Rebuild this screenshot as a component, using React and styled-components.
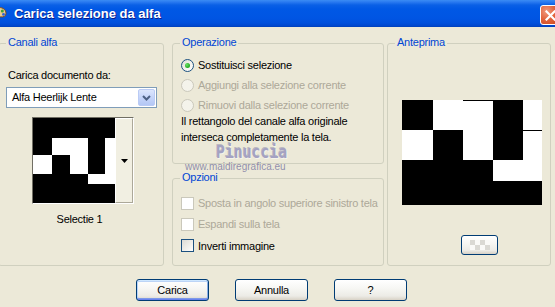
import React from 'react';
import styled, { createGlobalStyle } from 'styled-components';

const GlobalStyle = createGlobalStyle`
  html, body { margin: 0; padding: 0; width: 555px; height: 307px; overflow: hidden; background: #ECE9D8; }
  #root { width: 555px; height: 307px; }
`;

const Window = styled.div`
  position: relative;
  width: 555px;
  height: 307px;
  display: flex;
  flex-direction: column;
  overflow: hidden;
  background: #ECE9D8;
  font-family: "Liberation Sans", Arial, sans-serif;
  font-size: 11px;
  letter-spacing: -0.25px;
  color: #000;
`;

const TitleBar = styled.div`
  height: 27px;
  flex: none;
  display: flex;
  align-items: center;
  background: linear-gradient(180deg, #3B8CF4 0px, #2A7AF0 2px, #0A60E6 5px, #0058E5 9px, #0055E3 18px, #0050DC 23px, #0046CB 26px, #003FB5 27px);
`;

const TitleIcon = styled.svg`
  flex: none;
  margin-left: -9px;
  width: 16px;
  height: 16px;
`;

const TitleText = styled.span`
  margin-left: 7px;
  color: #fff;
  font-weight: bold;
  font-size: 13px;
  letter-spacing: 0;
  line-height: 16px;
  text-shadow: 1px 1px 0 #0A1E8C;
`;

const CloseButton = styled.div`
  align-self: flex-start;
  margin-top: 5px;
  margin-left: auto;
  margin-right: -6px;
  width: 21px;
  height: 20px;
  box-sizing: border-box;
  border: 1px solid #fff;
  border-radius: 3px;
  background: radial-gradient(circle at 30% 30%, #F09A7E 0%, #E2643C 45%, #C8441C 100%);
  display: flex;
  align-items: center;
  justify-content: center;
  flex: none;
`;

const Body = styled.div`
  flex: 1;
  display: flex;
  flex-direction: column;
  padding-top: 16px;
`;

const Columns = styled.div`
  display: flex;
  height: 223px;
`;

const Column = styled.div`
  display: flex;
  flex-direction: column;
  gap: 14px;
  margin-left: ${p => p.$ml}px;
`;

const Group = styled.div`
  position: relative;
  box-sizing: border-box;
  flex: none;
  width: ${p => p.$w}px;
  height: ${p => p.$h}px;
  margin-left: ${p => p.$ml || 0}px;
  border: 1px solid #D0D0BF;
  border-radius: 3px;
  display: flex;
  flex-direction: column;
  padding: ${p => p.$pad};
`;

const GroupTitle = styled.span`
  position: absolute;
  top: -7px;
  left: 7px;
  padding: 0 2px;
  background: #ECE9D8;
  color: #0046D5;
  line-height: 11px;
  white-space: nowrap;
`;

const Label = styled.div`
  line-height: 13px;
  white-space: nowrap;
  color: ${p => (p.$disabled ? '#ACA899' : '#000')};
`;

const Combo = styled.div`
  margin-top: 5px;
  margin-left: -2px;
  width: 151px;
  height: 21px;
  box-sizing: border-box;
  border: 1px solid #7F9DB9;
  background: #fff;
  padding: 1px;
  display: flex;
  align-items: stretch;
`;

const ComboText = styled.div`
  flex: 1;
  padding-left: 4px;
  display: flex;
  align-items: center;
  line-height: 13px;
`;

const ComboButton = styled.div`
  width: 17px;
  box-sizing: border-box;
  border: 1px solid #BACBF5;
  border-radius: 2px;
  background: linear-gradient(180deg, #DCE6FD 0%, #C6D5FA 50%, #B3C7F5 100%);
  display: flex;
  align-items: center;
  justify-content: center;
`;

const ThumbFrame = styled.div`
  margin-top: 9px;
  margin-left: 24px;
  width: 102px;
  height: 87px;
  box-sizing: border-box;
  border-top: 1px solid #716F64;
  border-left: 1px solid #716F64;
  border-bottom: 1px solid #FFFFFF;
  border-right: 1px solid #FFFFFF;
  display: flex;
`;

const ThumbButton = styled.div`
  width: 18px;
  box-sizing: border-box;
  border-top: 1px solid #FFFFFF;
  border-left: 1px solid #FFFFFF;
  border-right: 1px solid #ACA899;
  border-bottom: 1px solid #ACA899;
  background: #F1EFE2;
  display: flex;
  align-items: center;
  justify-content: center;
`;

const Caption = styled.div`
  margin-top: 9px;
  margin-left: -4px;
  text-align: center;
  line-height: 13px;
`;

const OptionRow = styled.div`
  height: ${p => p.$h}px;
  display: flex;
  align-items: center;
  white-space: nowrap;
`;

const Radio = styled.span`
  flex: none;
  width: 13px;
  height: 13px;
  box-sizing: border-box;
  border-radius: 50%;
  margin-right: 4px;
  border: 1px solid ${p => (p.$disabled ? '#CAC8BB' : '#1C5180')};
  background: ${p => (p.$disabled ? '#F4F3EB' : 'linear-gradient(135deg, #DCDBD5 0%, #F2F1EC 50%, #FFFFFF 100%)')};
  display: flex;
  align-items: center;
  justify-content: center;
  &::after {
    content: '';
    display: ${p => (p.$checked ? 'block' : 'none')};
    width: 5px;
    height: 5px;
    border-radius: 50%;
    background: radial-gradient(circle at 35% 35%, #6BE067 0%, #2BB12A 60%, #1F8E1F 100%);
  }
`;

const Check = styled.span`
  flex: none;
  width: 13px;
  height: 13px;
  box-sizing: border-box;
  margin-right: 4px;
  border: 1px solid ${p => (p.$disabled ? '#CAC8BB' : '#1C5180')};
  background: ${p => (p.$disabled ? '#FFFFFF' : 'linear-gradient(135deg, #DCDBD5 0%, #F0EFEA 55%, #FFFFFF 100%)')};
`;

const Paragraph = styled.div`
  margin-top: -2px;
  line-height: 16px;
`;

const PreviewButton = styled.div`
  margin-top: 30px;
  margin-left: 59px;
  width: 37px;
  height: 20px;
  box-sizing: border-box;
  border: 1px solid #003C74;
  border-radius: 3px;
  background: linear-gradient(180deg, #FFFFFF 0%, #F4F4F0 50%, #ECEBE6 80%, #D6D0C5 100%);
  display: flex;
  align-items: center;
  justify-content: center;
`;

const ButtonRow = styled.div`
  margin-top: 13px;
  padding-left: 136px;
  display: flex;
  gap: 26px;
`;

const Button = styled.div`
  width: ${p => p.$w || 73}px;
  height: 22px;
  box-sizing: border-box;
  border: 1px solid #003C74;
  border-radius: 3px;
  background: linear-gradient(180deg, #FFFFFF 0%, #F7F7F4 40%, #ECEBE6 80%, #D8D2C6 100%);
  display: flex;
  align-items: center;
  justify-content: center;
  line-height: 13px;
  box-shadow: ${p => (p.$default ? 'inset 0 1px 0 #CEE7FF, inset 0 -1px 0 #6982EE, inset 1px 0 0 #B8D4FB, inset -1px 0 0 #89ADE4, inset 0 2px 0 #BCD4F6, inset 0 -2px 0 #7D99E8' : 'none')};
`;

const WatermarkName = styled.div`
  position: absolute;
  left: 216px;
  top: 145px;
  font-family: "DejaVu Sans Mono", "Liberation Mono", monospace;
  font-weight: bold;
  font-size: 17px;
  line-height: 14px;
  letter-spacing: 0;
  color: #A4A2C2;
  text-shadow: -1px -1px 0 rgba(110, 108, 150, 0.4), 1px 1px 0 rgba(255, 255, 255, 0.5);
  transform: scaleX(0.87);
  transform-origin: left top;
  pointer-events: none;
`;

const WatermarkUrl = styled.div`
  position: absolute;
  left: 185px;
  top: 162px;
  font-size: 10px;
  line-height: 10px;
  letter-spacing: 0;
  color: rgba(120, 118, 160, 0.8);
  pointer-events: none;
`;

function PaletteIcon() {
  return (
    <TitleIcon viewBox="0 0 16 16">
      <path d="M8 1.5C3.8 1.5 1 4.2 1 7.6c0 3.3 2.6 6.4 6.3 6.9 1.4.2 1.6-1.2 1-2-.6-.9.2-1.8 1.3-1.6 3.3.4 5.4-.8 5.4-3.7C15 4 12.2 1.5 8 1.5z" fill="#EBCB8E" stroke="#7A4A1E" strokeWidth="1" />
      <circle cx="4.5" cy="7" r="1.5" fill="#D63A2A" />
      <circle cx="7.5" cy="4.5" r="1.5" fill="#F2C12E" />
      <circle cx="11.3" cy="5" r="1.5" fill="#3DA03A" />
      <circle cx="12.5" cy="8.4" r="1.4" fill="#2E63D8" />
    </TitleIcon>
  );
}

function CloseX() {
  return (
    <svg width="11" height="11" viewBox="0 0 11 11">
      <path d="M1.5 1.5 L9.5 9.5 M9.5 1.5 L1.5 9.5" stroke="#fff" strokeWidth="2.2" strokeLinecap="square" />
    </svg>
  );
}

function Chevron() {
  return (
    <svg width="9" height="6" viewBox="0 0 9 6">
      <polyline points="1,1 4.5,4.5 8,1" fill="none" stroke="#4D6185" strokeWidth="2" />
    </svg>
  );
}

function DownTriangle() {
  return (
    <svg width="7" height="4" viewBox="0 0 7 4">
      <polygon points="0,0 7,0 3.5,4" fill="#000" />
    </svg>
  );
}

function ThumbImage() {
  return (
    <svg width="82" height="85" viewBox="0 0 82 85" style={{ display: 'block', flex: 'none' }}>
      <rect x="0" y="0" width="82" height="85" fill="#000" />
      <rect x="19" y="20" width="36" height="17" fill="#fff" />
      <rect x="72" y="20" width="10" height="46" fill="#fff" />
      <rect x="0" y="37" width="19" height="19" fill="#fff" />
      <rect x="37" y="37" width="18" height="19" fill="#fff" />
      <rect x="55" y="56" width="27" height="10" fill="#fff" />
    </svg>
  );
}

function PreviewImage() {
  return (
    <svg width="140" height="105" viewBox="0 0 140 105" style={{ display: 'block' }}>
      <rect x="0" y="0" width="140" height="105" fill="#000" />
      <rect x="31" y="0" width="60" height="30" fill="#fff" />
      <rect x="121" y="0" width="19" height="60" fill="#fff" />
      <rect x="0" y="30" width="31" height="30" fill="#fff" />
      <rect x="61" y="30" width="30" height="30" fill="#fff" />
      <rect x="91" y="60" width="49" height="21" fill="#fff" />
      <rect x="61" y="0" width="30" height="1" fill="#000" />
      <rect x="121" y="30" width="19" height="1" fill="#000" />
    </svg>
  );
}

function Checker() {
  const cells = [];
  for (let r = 0; r < 2; r++) {
    for (let c = 0; c < 4; c++) {
      if ((r + c) % 2 === 0) cells.push(<rect key={`${r}-${c}`} x={c * 5} y={r * 5} width="5" height="5" fill="#DAD9D4" />);
    }
  }
  return (
    <svg width="20" height="10" viewBox="0 0 20 10">
      <rect x="0" y="0" width="20" height="10" fill="#FAFAF8" />
      {cells}
    </svg>
  );
}

export default function App() {
  return (
    <>
      <GlobalStyle />
      <Window>
        <TitleBar>
          <PaletteIcon />
          <TitleText>Carica selezione da alfa</TitleText>
          <CloseButton><CloseX /></CloseButton>
        </TitleBar>
        <Body>
          <Columns>
            <Group $w={166} $h={223} $ml={-2} $pad="25px 8px 0 9px">
              <GroupTitle>Canali alfa</GroupTitle>
              <Label>Carica documento da:</Label>
              <Combo>
                <ComboText>Alfa Heerlijk Lente</ComboText>
                <ComboButton><Chevron /></ComboButton>
              </Combo>
              <ThumbFrame>
                <ThumbImage />
                <ThumbButton><DownTriangle /></ThumbButton>
              </ThumbFrame>
              <Caption>Selectie 1</Caption>
            </Group>
            <Column $ml={8}>
              <Group $w={212} $h={121} $pad="11px 8px 0 8px">
                <GroupTitle>Operazione</GroupTitle>
                <OptionRow $h={20}><Radio $checked />Sostituisci selezione</OptionRow>
                <OptionRow $h={20}><Radio $disabled /><Label $disabled>Aggiungi alla selezione corrente</Label></OptionRow>
                <OptionRow $h={20}><Radio $disabled /><Label $disabled>Rimuovi dalla selezione corrente</Label></OptionRow>
                <Paragraph>Il rettangolo del canale alfa originale<br />interseca completamente la tela.</Paragraph>
              </Group>
              <Group $w={212} $h={88} $pad="14px 8px 0 8px">
                <GroupTitle>Opzioni</GroupTitle>
                <OptionRow $h={21}><Check $disabled /><Label $disabled>Sposta in angolo superiore sinistro tela</Label></OptionRow>
                <OptionRow $h={21}><Check $disabled /><Label $disabled>Espandi sulla tela</Label></OptionRow>
                <OptionRow $h={21}><Check />Inverti immagine</OptionRow>
              </Group>
            </Column>
            <Group $w={164} $h={223} $ml={3} $pad="56px 0 0 14px">
              <GroupTitle>Anteprima</GroupTitle>
              <PreviewImage />
              <PreviewButton><Checker /></PreviewButton>
            </Group>
          </Columns>
          <ButtonRow>
            <Button $default>Carica</Button>
            <Button>Annulla</Button>
            <Button>?</Button>
          </ButtonRow>
        </Body>
        <WatermarkName>Pinuccia</WatermarkName>
        <WatermarkUrl>www.maidiregrafica.eu</WatermarkUrl>
      </Window>
    </>
  );
}
